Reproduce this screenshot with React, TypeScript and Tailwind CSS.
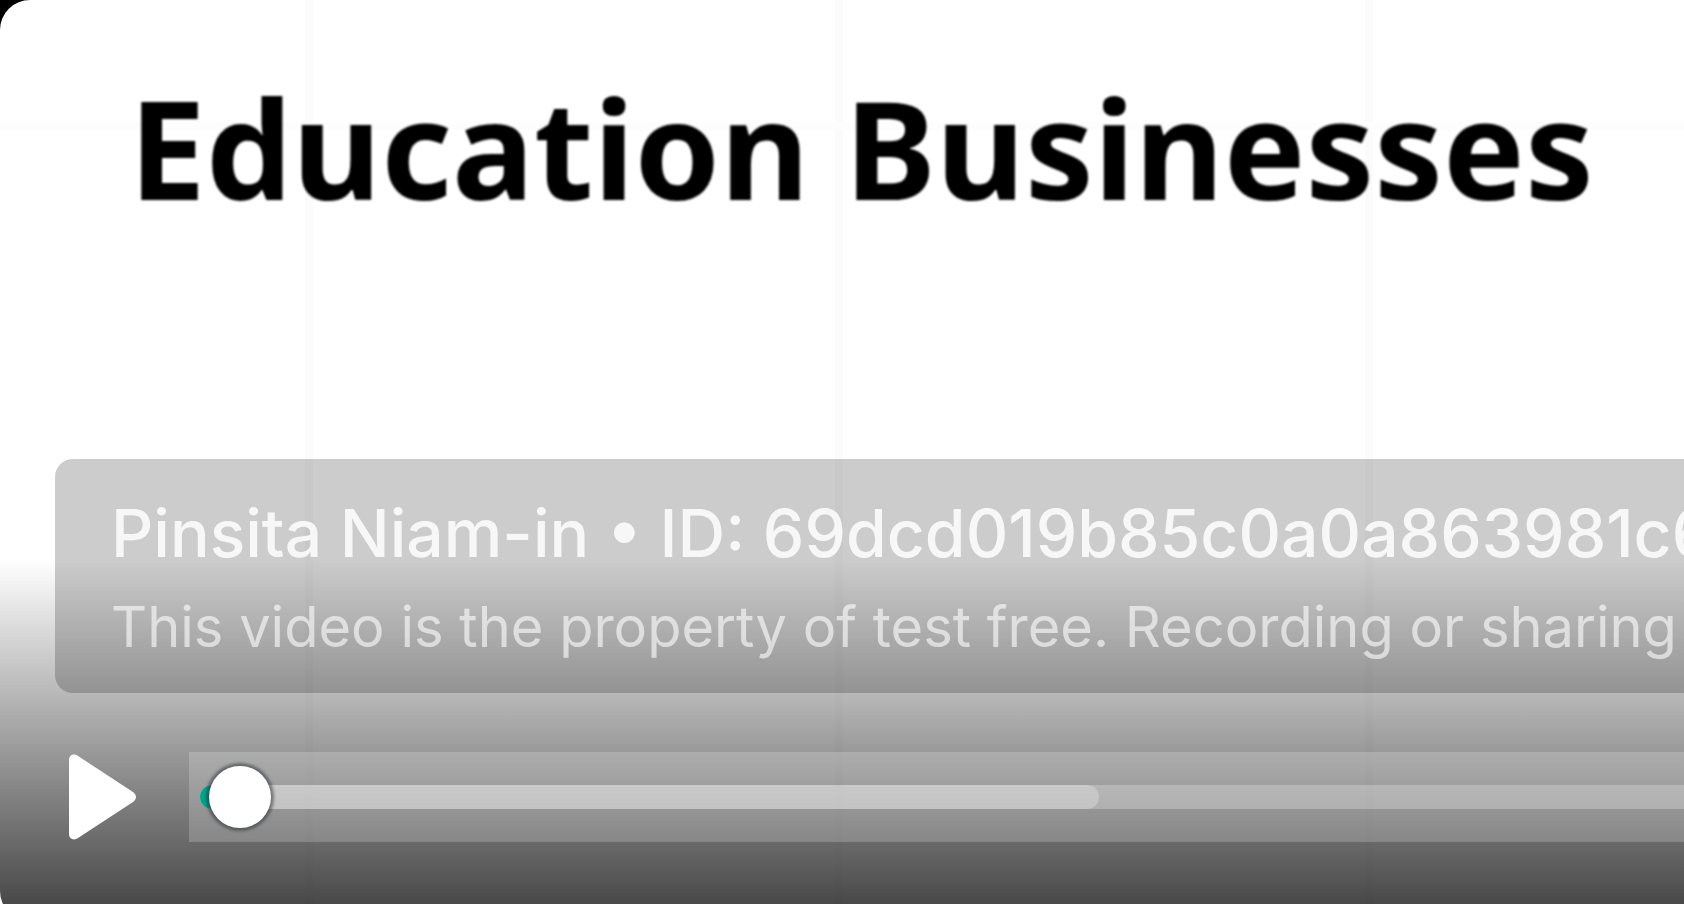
import { useState } from "react";

const GRID_COLUMNS = ["left-[305px]", "left-[835px]", "left-[1365px]"];

function Slide() {
  return (
    <div className="absolute inset-0 overflow-hidden bg-white">
      {GRID_COLUMNS.map((left) => (
        <div key={left} className={`absolute inset-y-0 w-2 bg-[#fbfbfb] ${left}`} />
      ))}
      <div className="absolute inset-x-0 top-[122px] h-2 bg-[#fdfdfd]" />
    </div>
  );
}

function Watermark() {
  return (
    <div className="ml-[55px] flex flex-col gap-4 rounded-l-[18px] bg-black/20 pt-[35px] pb-[27px] pl-14 whitespace-nowrap">
      <p className="text-[66px] leading-[78px] font-medium text-white/85">
        Pinsita Niam-in • ID: 69dcd019b85c0a0a863981c6
      </p>
      <p className="text-[56px] leading-[78px] text-white/60">
        This video is the property of test free. Recording or sharing
      </p>
    </div>
  );
}

function Controls() {
  const [progress, setProgress] = useState(0);

  return (
    <div className="flex items-center gap-[52px] pl-[69px]">
      <button type="button" aria-label="Play" className="shrink-0">
        <svg viewBox="0 0 68 86" className="h-[86px] w-[68px] fill-white">
          <path d="M0 6C0 1 5-1 9 2L64 38C68 41 68 45 64 48L9 84C5 87 0 85 0 80Z" />
        </svg>
      </button>
      <div className="relative h-[90px] flex-1 bg-white/20 pl-[11px]">
        <div className="flex h-full items-center">
          <div className="h-6 w-full rounded-l-full bg-white/25">
            <div className="h-full w-[899px] rounded-full bg-white/25">
              <div className="h-full w-10 rounded-l-full bg-[#00a58e]" />
            </div>
          </div>
        </div>
        <input
          type="range"
          aria-label="Seek"
          min={0}
          max={100}
          value={progress}
          onChange={(e) => setProgress(Number(e.target.value))}
          className="absolute inset-y-0 right-0 left-5 appearance-none bg-transparent [&::-webkit-slider-thumb]:size-[62px] [&::-webkit-slider-thumb]:appearance-none [&::-webkit-slider-thumb]:rounded-full [&::-webkit-slider-thumb]:bg-white [&::-webkit-slider-thumb]:shadow-[0_0_3px_3px_rgba(35,40,47,0.5)]"
        />
      </div>
    </div>
  );
}

export default function App() {
  return (
    <div className="h-screen overflow-hidden bg-[linear-gradient(#000_50%,#fff_50%)] font-[Inter,sans-serif]">
      <div className="relative h-[calc(100vh+17px)] overflow-hidden rounded-l-[30px]">
        <Slide />
        <div className="absolute inset-x-0 bottom-0 h-[362px] bg-linear-to-b from-black/0 to-black/75" />
        <div className="relative flex h-full flex-col pb-[79px]">
          <h1 className="pt-[57px] pl-[129px] font-['Noto_Sans',sans-serif] text-[137px] leading-[180px] font-bold whitespace-nowrap text-black blur-[1px]">
            Education Businesses
          </h1>
          <div className="mt-auto flex flex-col gap-[59px]">
            <Watermark />
            <Controls />
          </div>
        </div>
      </div>
    </div>
  );
}
